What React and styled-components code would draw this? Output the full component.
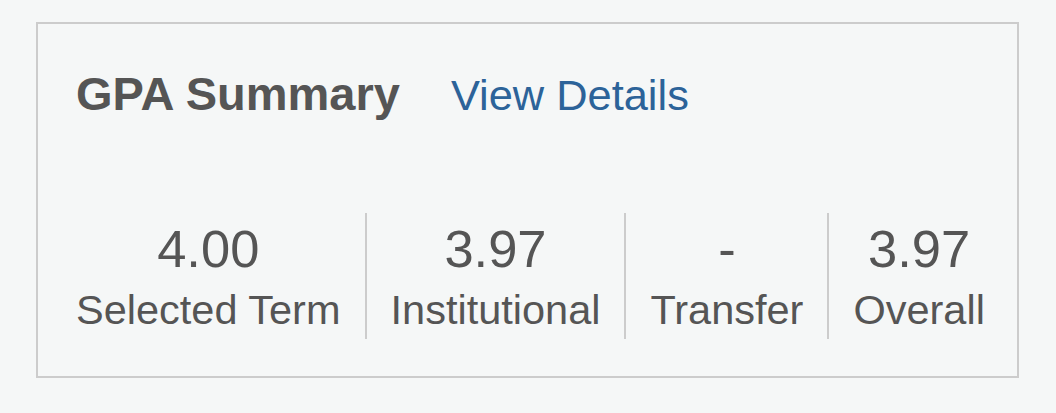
import React from 'react';
import styled, { createGlobalStyle } from 'styled-components';

const GlobalStyle = createGlobalStyle`
  html, body {
    margin: 0;
    padding: 0;
    background: #f5f7f7;
    font-family: 'Liberation Sans', Arial, Helvetica, sans-serif;
  }
`;

const Page = styled.div`
  padding: 22px 37px 0 36px;
`;

const Card = styled.section`
  border: 2px solid #cccccc;
  padding: 43px 38px 37px;
  box-sizing: border-box;
  height: 356px;
`;

const Header = styled.div`
  display: flex;
  align-items: baseline;
  gap: 51px;
`;

const Title = styled.h2`
  margin: 0;
  font-size: 47px;
  line-height: 53px;
  font-weight: 700;
  color: #555555;
`;

const DetailsLink = styled.a`
  font-size: 43.4px;
  line-height: 53px;
  color: #2c6399;
  text-decoration: none;
  cursor: pointer;
`;

const Stats = styled.div`
  display: flex;
  margin-top: 91px;
`;

const Stat = styled.div`
  display: flex;
  flex-direction: column;
  align-items: center;
  padding: 10px 24px 8px;
  border-right: ${(p) => (p.$last ? 'none' : '2px solid #cccccc')};

  &:first-child {
    padding-left: 0;
  }
`;

const Value = styled.div`
  font-size: 52.5px;
  line-height: 52px;
  color: #555555;
`;

const Label = styled.div`
  margin-top: 14px;
  font-size: 41.5px;
  line-height: 42px;
  color: #555555;
  white-space: nowrap;
`;

const stats = [
  { value: '4.00', label: 'Selected Term' },
  { value: '3.97', label: 'Institutional' },
  { value: '-', label: 'Transfer' },
  { value: '3.97', label: 'Overall' },
];

const App = () => (
  <>
    <GlobalStyle />
    <Page>
      <Card>
        <Header>
          <Title>GPA Summary</Title>
          <DetailsLink href='#'>View Details</DetailsLink>
        </Header>
        <Stats>
          {stats.map((s, i) => (
            <Stat key={s.label} $last={i === stats.length - 1}>
              <Value>{s.value}</Value>
              <Label>{s.label}</Label>
            </Stat>
          ))}
        </Stats>
      </Card>
    </Page>
  </>
);

export default App;
